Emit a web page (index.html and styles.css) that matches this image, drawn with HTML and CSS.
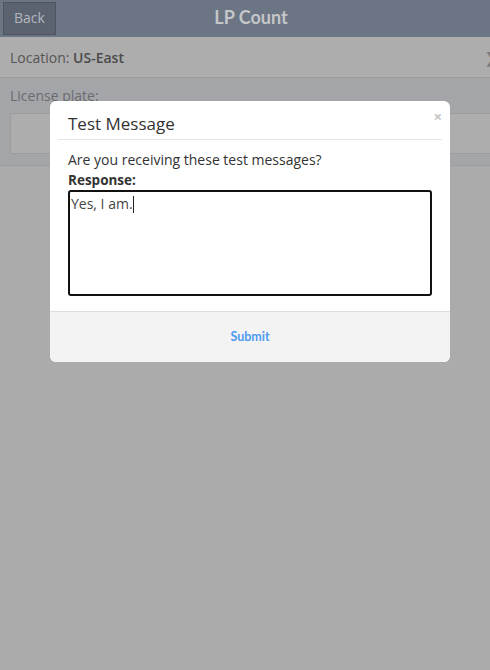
FILE: index.html
```
<!DOCTYPE html>
<html>
<head>
<meta charset="utf-8">
<link rel="stylesheet" href="styles.css">
</head>
<body>
<div class="app">
  <header class="topbar">
    <button class="back">Back</button>
    <h1 class="title">LP Count</h1>
  </header>
  <div class="location">
    <span>Location: <b>US-East</b></span>
    <span class="chev">&#x276F;</span>
  </div>
  <section class="plate">
    <div class="plate-label">License plate:</div>
    <div class="plate-input"></div>
  </section>
</div>
<div class="modal">
  <div class="modal-head">
    <h2 class="modal-title">Test Message</h2>
    <span class="close">&times;</span>
  </div>
  <div class="modal-body">
    <p class="msg">Are you receiving these test messages?</p>
    <div class="resp-label">Response:</div>
    <div class="textarea">Yes, I am.<span class="caret"></span></div>
  </div>
  <div class="modal-foot">
    <span class="submit">Submit</span>
  </div>
</div>
</body>
</html>
```
FILE: styles.css
```
* { box-sizing: border-box; }
html, body { margin: 0; padding: 0; }
body {
  width: 490px;
  height: 670px;
  overflow: hidden;
  background: #ababab;
  font-family: "Open Sans", "Liberation Sans", sans-serif;
  position: relative;
}
.topbar {
  height: 37px;
  background: #6b7583;
  display: flex;
  align-items: center;
  justify-content: center;
  position: relative;
}
.back {
  position: absolute;
  left: 3px;
  top: 2px;
  width: 53px;
  height: 33px;
  background: #5b6371;
  border: 1px solid #4e5562;
  color: #b3b7bd;
  font-family: "Open Sans", sans-serif;
  font-size: 14px;
  padding: 0 0 3px;
}
.title {
  margin: 0 0 3px 12px;
  font-family: Lato, "Open Sans", sans-serif;
  font-weight: bold;
  font-size: 18px;
  color: #c4c6c9;
}
.location {
  height: 41px;
  background: #adadad;
  border-bottom: 1px solid #9b9b9b;
  display: flex;
  align-items: center;
  justify-content: space-between;
  padding-left: 10px;
  font-size: 14px;
  color: #555;
}
.location b { color: #4b4b4b; font-weight: 600; }
.chev {
  color: #7c7c7c;
  font-size: 14px;
  margin-right: -7px;
  font-weight: bold;
}
.plate {
  background: #a4a5a9;
  padding: 10px 0 11px 10px;
  border-bottom: 1px solid #9c9d9f;
}
.plate-label {
  font-size: 14px;
  color: #6a6b70;
  line-height: 16px;
  margin-bottom: 9px;
}
.plate-input {
  height: 41px;
  margin-right: -10px;
  background: #adadad;
  border: 1px solid #9c9c9c;
}
.modal {
  position: absolute;
  left: 50px;
  top: 101px;
  width: 400px;
  background: #fff;
  border-radius: 6px;
  overflow: hidden;
}
.modal-head {
  margin: 0 8px;
  padding: 11px 10px 3px;
  border-bottom: 1px solid #e6e6e6;
  position: relative;
}
.modal-title {
  margin: 0;
  font-size: 17px;
  font-weight: normal;
  line-height: 24px;
  color: #333;
}
.close {
  position: absolute;
  right: 0;
  top: 7px;
  font-size: 15px;
  line-height: 16px;
  font-weight: bold;
  color: #c4c4c4;
}
.modal-body {
  padding: 10px 18px 15px;
  font-size: 14px;
  color: #333;
}
.msg { margin: 0; line-height: 20px; }
.resp-label { font-weight: bold; line-height: 20px; color: #333; font-size: 13.5px; }
.textarea {
  height: 106px;
  border: 2px solid #111;
  border-radius: 3px;
  padding: 2px 1px;
  font-size: 14px;
  line-height: 19px;
  color: #444;
}
.caret {
  display: inline-block;
  width: 1px;
  height: 17px;
  background: #222;
  vertical-align: -4px;
}
.modal-foot {
  height: 51px;
  background: #f3f3f3;
  border-top: 1px solid #dedede;
  display: flex;
  align-items: center;
  justify-content: center;
}
.submit {
  color: #4f9bf2;
  font-family: Lato, "Open Sans", sans-serif;
  font-weight: bold;
  font-size: 12.5px;
  margin-bottom: 2px;
}
```
